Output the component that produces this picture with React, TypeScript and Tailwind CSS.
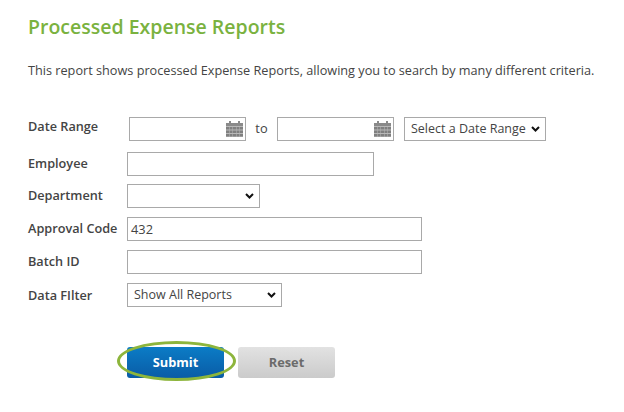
const inputCls = "h-[24px] border border-[#a9a9a9] bg-white box-border";

function CalendarIcon() {
  return (
    <svg width="17" height="16" viewBox="0 0 17 16" className="absolute right-[2px] top-[3px]">
      <rect x="3" y="0" width="2" height="3" fill="#8a8a8a" />
      <rect x="12" y="0" width="2" height="3" fill="#8a8a8a" />
      <rect x="0" y="2" width="17" height="3" fill="#8a8a8a" />
      <rect x="0" y="5" width="17" height="11" fill="#b9b9b9" />
      {[0, 3.5, 7, 10.5, 14].map((x) =>
        [6, 9.5, 13].map((y) => <rect key={`${x}-${y}`} x={x} y={y} width="3" height="2.5" fill="#808080" />)
      )}
    </svg>
  );
}

function DateInput() {
  return (
    <div className={`relative ${inputCls} w-[117px]`}>
      <CalendarIcon />
    </div>
  );
}

function Select({ w, text }: { w: string; text: string }) {
  return (
    <div className={`${inputCls} ${w} flex items-center justify-between pl-[6px] pr-[5px] text-[12.5px] text-[#444]`}>
      <span>{text}</span>
      <svg width="9" height="6" viewBox="0 0 9 6">
        <path d="M1 1l3.5 3.5L8 1" fill="none" stroke="#111" strokeWidth="2" />
      </svg>
    </div>
  );
}

function Row({ label, children, mb, labelCls = "pb-[2px]" }: { label: string; children: React.ReactNode; mb: string; labelCls?: string }) {
  return (
    <div className={`flex items-center ${mb}`}>
      <div className={`w-[99px] text-[12.7px] font-semibold text-[#444] ${labelCls}`}>{label}</div>
      {children}
    </div>
  );
}

export default function App() {
  return (
    <div className="w-[624px] h-[412px] bg-white overflow-hidden pl-[28px] pt-[13px] font-['Open_Sans',sans-serif]">
      <h1 className="text-[19.5px] leading-[27px] font-semibold text-[#7ab23f]">Processed Expense Reports</h1>
      <p className="mt-[22px] text-[12.7px] leading-[17px] text-[#444] whitespace-nowrap">
        This report shows processed Expense Reports, allowing you to search by many different criteria.
      </p>

      <div className="mt-[38px]">
        <Row label="Date Range" mb="mb-[11px]" labelCls="pb-[5px]">
          <div className="flex items-center pl-[2px]">
            <DateInput />
            <span className="w-[31px] text-center text-[12.8px] text-[#444]">to</span>
            <DateInput />
            <div className="ml-[10px]">
              <Select w="w-[142px]" text="Select a Date Range" />
            </div>
          </div>
        </Row>
        <Row label="Employee" mb="mb-[8px]">
          <div className={`${inputCls} w-[247px]`} />
        </Row>
        <Row label="Department" mb="mb-[9px]">
          <Select w="w-[133px]" text="" />
        </Row>
        <Row label="Approval Code" mb="mb-[9px]">
          <div className={`${inputCls} w-[295px] pl-[3px] text-[12.8px] leading-[22px] text-[#444]`}>432</div>
        </Row>
        <Row label="Batch ID" mb="mb-[9px]">
          <div className={`${inputCls} w-[295px]`} />
        </Row>
        <Row label="Data FIlter" mb="mb-[0px]" labelCls="">
          <Select w="w-[155px]" text="Show All Reports" />
        </Row>
      </div>

      <div className="mt-[40px] ml-[99px] flex items-center">
        <div className="relative">
          <button className="w-[97px] h-[31px] rounded-[3px] bg-gradient-to-b from-[#0b7cc6] to-[#0a5ca6] text-white text-[12.8px] font-bold">
            Submit
          </button>
          <div className="absolute left-[-10px] top-[-6px] w-[119px] h-[40px] rounded-[50%] border-[3px] border-[#8db53c]" />
        </div>
        <button className="ml-[14px] w-[97px] h-[31px] rounded-[3px] bg-gradient-to-b from-[#e2e2e2] to-[#cbcbcb] text-[#6b6b6b] text-[12.8px] font-bold">
          Reset
        </button>
      </div>
    </div>
  );
}
